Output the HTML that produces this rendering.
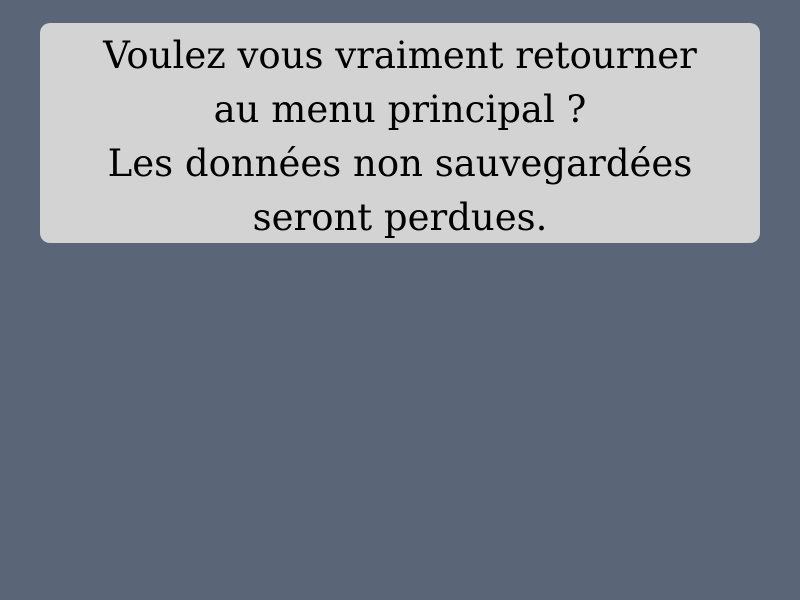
<!DOCTYPE html>
<html><head><meta charset="utf-8"><style>
html,body{margin:0;padding:0;width:800px;height:600px;background:#5a6678;overflow:hidden}
.box{position:absolute;left:40px;top:23px;width:720px;height:220px;background:#d3d3d3;border-radius:10px;
font-family:"DejaVu Serif","Liberation Serif",serif;font-size:37px;line-height:54px;color:#000;text-align:center;padding-top:6px;box-sizing:border-box}
</style></head><body>
<div class="box">Voulez vous vraiment retourner<br>au menu principal ?<br>Les données non sauvegardées<br>seront perdues.</div>
</body></html>
